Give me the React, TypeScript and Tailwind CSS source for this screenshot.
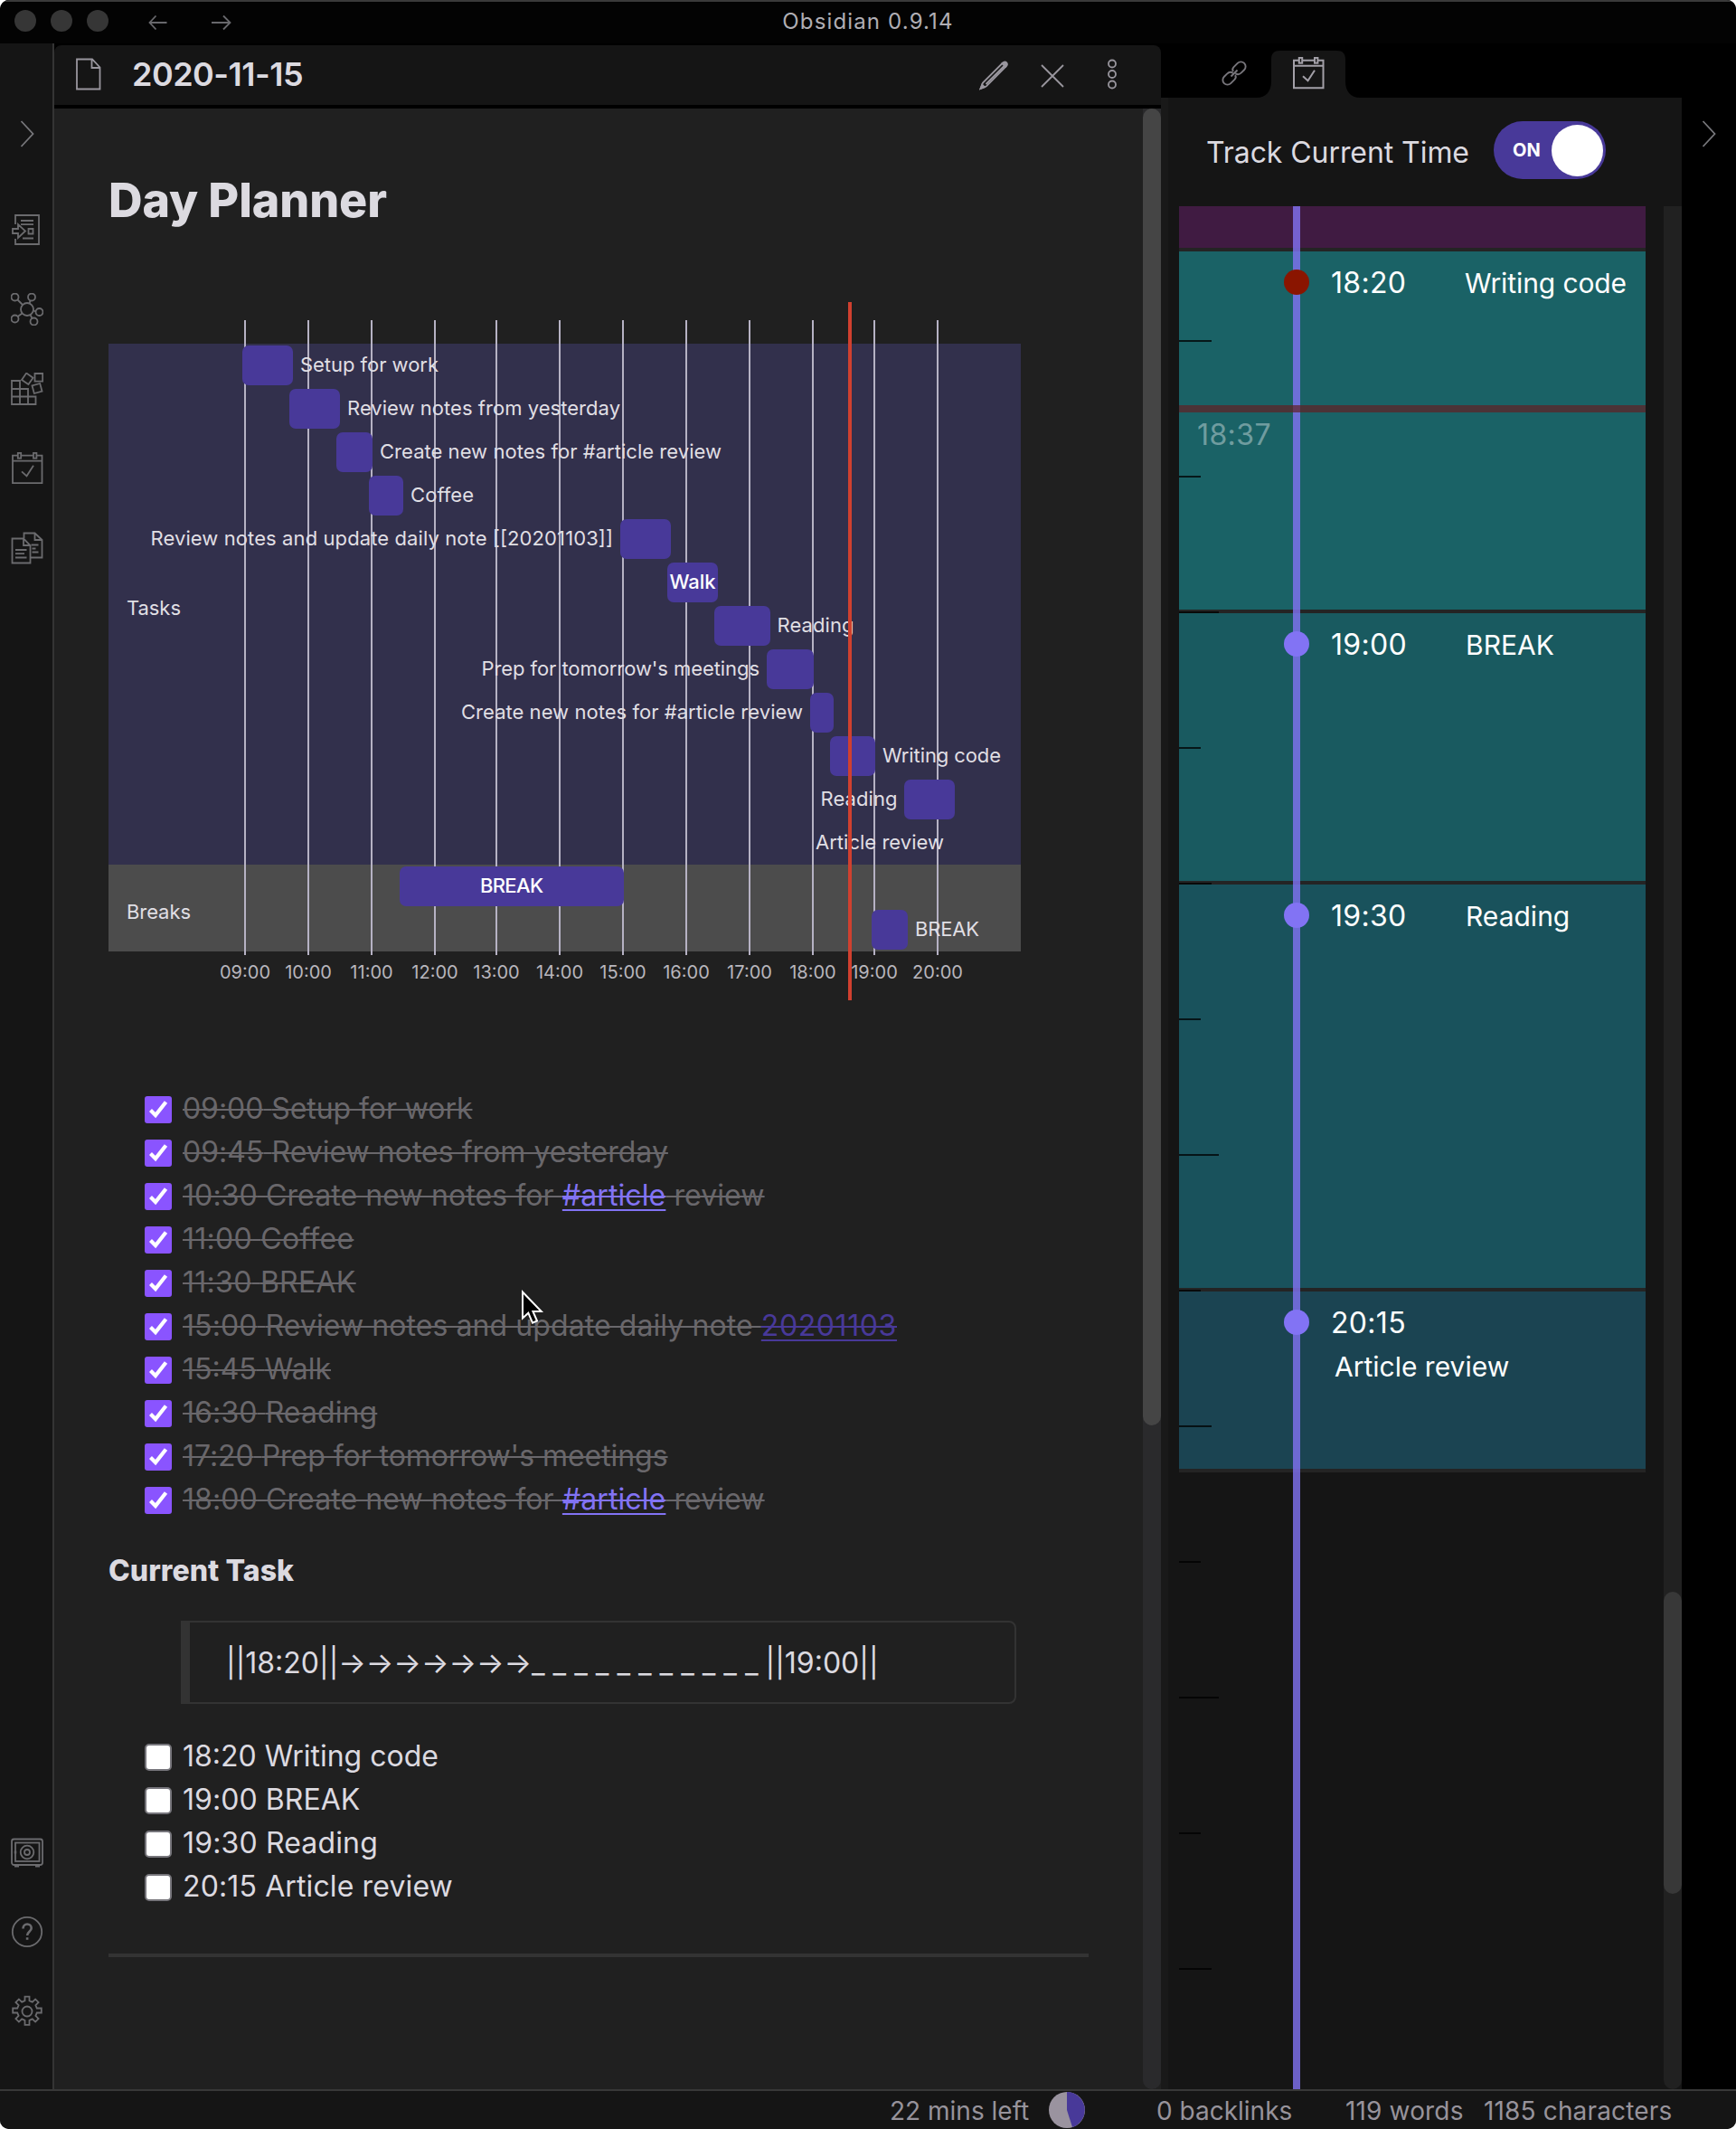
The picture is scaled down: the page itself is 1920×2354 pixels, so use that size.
import React from 'react';

type IconProps = { children: React.ReactNode; size?: number; className?: string; sw?: number };

function Icon({ children, size = 36, className = '', sw = 1.8 }: IconProps) {
  return (
    <svg width={size} height={size} viewBox="0 0 36 36" fill="none" stroke="currentColor" strokeWidth={sw} className={`shrink-0 ${className}`}>
      {children}
    </svg>
  );
}

const calendarPaths = (
  <>
    <path d="M7.500 3.700H2v30.500h32.500V3.700h-5.500M11.500 3.700h13M2 9.700h32.500M12 21.300l5.500 5 7.500-11.500" />
    <rect x="7.800" y="0.900" width="3.400" height="5.800" />
    <rect x="25" y="0.900" width="3.400" height="5.800" />
  </>
);

const ribbonTop = [
  <>
    <path d="M5 12V2h26v32H5v-6" />
    <path d="M2 17h6v-5l8 7.500-8 7.500v-5H2zM11 8h14M11 12.200h14M13 27.500h12M19.500 17h5v5.500h-5z" />
  </>,
  <>
    <circle cx="18" cy="18" r="7" />
    <circle cx="4.500" cy="4.500" r="4" />
    <circle cx="23" cy="4.500" r="4" />
    <circle cx="31.500" cy="21" r="4" />
    <circle cx="25.500" cy="31.500" r="4" />
    <circle cx="4.500" cy="28.500" r="4" />
    <path d="M7.500 7.500l5.500 5.500M21.500 8.200l-1 3.500M25 19.500l2.700.8M21.500 24l2 4M12.500 22.500l-5 3.500" />
  </>,
  <>
    <path d="M1 9h9v26H1zM1 18h18v17H1zM1 26.500h26.500V35H1M10 18v17M19 18v17M26.500 1h8.700v8.700h-8.700z" />
    <rect x="13.800" y="2.300" width="9" height="9" transform="rotate(35 18.300 6.800)" />
    <rect x="24.500" y="13" width="9" height="9" transform="rotate(-15 29 17.500)" />
  </>,
  calendarPaths,
  <>
    <path d="M1.500 7.500h12.500l7.500 7.500v19.500h-20zM14 7.500V15h7.500" />
    <path d="M14.500 7V1.500h12l8 7.500v19.500H22M26.500 1.500V9h8M5 20h12.500M5 24.200h10M5 28.500h12.500M22.500 14.500h8M23.500 18.500h4M23.500 22.500h7" />
  </>,
];

const ribbonBottom = [
  <>
    <rect x="1" y="3.500" width="34" height="28.500" rx="2.500" />
    <rect x="5" y="7.500" width="26.500" height="20.500" />
    <circle cx="18" cy="18" r="7.300" />
    <circle cx="18" cy="18" r="3" />
    <path d="M4 33.200h5M27 33.200h5M5 16.500v3" strokeWidth="2.500" />
  </>,
  <>
    <circle cx="18" cy="18" r="16.200" />
    <path d="M13.500 14.500c0-3 2-5 4.600-5s4.600 1.800 4.600 4.500c0 3.600-4.600 4-4.600 8M18.100 24.200v2.600" strokeWidth="2.600" />
  </>,
  <>
    <circle cx="18" cy="18" r="5.500" />
    <path d="M15.500 1.700h5v4.500l3.300 1.400 3.300-3.200 3.500 3.500-3.200 3.300 1.400 3.300h5v5h-5l-1.400 3.300 3.200 3.300-3.500 3.500-3.300-3.200-3.300 1.400v5h-5v-5l-3.300-1.400-3.300 3.200-3.500-3.500 3.200-3.300-1.400-3.300h-5v-5h5l1.400-3.300-3.200-3.300 3.500-3.500 3.300 3.200 3.300-1.400z" />
  </>,
];

function Chevron() {
  return (
    <svg width="16" height="30" viewBox="0 0 16 30" fill="none" stroke="#77777b" strokeWidth="1.800">
      <path d="M1.500 1l13 14-13 14" />
    </svg>
  );
}

type Bar = { x: number; w: number; label: string; lx: number; lw: number; inside?: boolean };

const bars: Bar[] = [
  { x: 268, w: 56, label: 'Setup for work', lx: 332, lw: 153 },
  { x: 320, w: 56, label: 'Review notes from yesterday', lx: 384, lw: 302 },
  { x: 372, w: 40, label: 'Create new notes for #article review', lx: 420, lw: 378 },
  { x: 408, w: 38, label: 'Coffee', lx: 454, lw: 70 },
  { x: 686, w: 56, label: 'Review notes and update daily note [[20201103]]', lx: 166.5, lw: 511.5 },
  { x: 738, w: 56, label: 'Walk', lx: 740.5, lw: 51, inside: true },
  { x: 790, w: 62, label: 'Reading', lx: 859.5, lw: 85 },
  { x: 848, w: 52, label: "Prep for tomorrow's meetings", lx: 532.5, lw: 307.5 },
  { x: 896, w: 26, label: 'Create new notes for #article review', lx: 510, lw: 378 },
  { x: 918, w: 50, label: 'Writing code', lx: 976, lw: 131 },
  { x: 1000, w: 56, label: 'Reading', lx: 907.5, lw: 85 },
  { x: 0, w: 0, label: 'Article review', lx: 902, lw: 142 },
  { x: 442, w: 248, label: 'BREAK', lx: 531, lw: 70, inside: true },
  { x: 964, w: 40, label: 'BREAK', lx: 1012, lw: 71 },
];

const hours = [271, 341, 411, 481, 549, 619, 689, 759, 829, 899, 967, 1037];

function Gantt() {
  return (
    <svg width="1009" height="776" viewBox="120 332 1009 776" className="block" fontFamily="Inter, sans-serif" fontSize="22">
      <rect x="120" y="380" width="1009" height="576" fill="#32304c" />
      <rect x="120" y="956" width="1009" height="96" fill="#4c4c4c" />
      {hours.map((x) => (
        <rect key={x} x={x - 1} y="354" width="2" height="702" fill="#b6b2c4" />
      ))}
      {bars.map((b, i) => b.w > 0 && <rect key={i} x={b.x} y={382 + i * 48} width={b.w} height="44" rx="7" fill="#483999" />)}
      {bars.map((b, i) => (
        <text key={i} x={b.lx} y={410.500 + i * 48} textLength={b.lw} fill={b.inside ? '#ffffff' : '#e0dfe4'} fontWeight={b.inside ? 500 : 400}>
          {b.label}
        </text>
      ))}
      <text x="140" y="680" textLength="60" fill="#e0dfe4">Tasks</text>
      <text x="140" y="1016" textLength="71" fill="#e0dfe4">Breaks</text>
      {hours.map((x, i) => (
        <text key={x} x={x} y="1082" textAnchor="middle" fontSize="20" fill="#b8b6bd">
          {`${String(i + 9).padStart(2, '0')}:00`}
        </text>
      ))}
      <rect x="938" y="334" width="4" height="772" fill="#d0402f" />
    </svg>
  );
}

type Task = { time: string; text: string; link?: string; tail?: string; dim?: boolean; tracking: string };

const done: Task[] = [
  { time: '09:00', text: 'Setup for work', tracking: 'tracking-[-0.07px]' },
  { time: '09:45', text: 'Review notes from yesterday', tracking: 'tracking-[0.02px]' },
  { time: '10:30', text: 'Create new notes for ', link: '#article', tail: ' review', tracking: 'tracking-[0.1px]' },
  { time: '11:00', text: 'Coffee', tracking: 'tracking-[0.28px]' },
  { time: '11:30', text: 'BREAK', tracking: 'tracking-[0.28px]' },
  { time: '15:00', text: 'Review notes and update daily note ', link: '20201103', dim: true, tracking: 'tracking-[0.08px]' },
  { time: '15:45', text: 'Walk', tracking: 'tracking-[0px]' },
  { time: '16:30', text: 'Reading', tracking: 'tracking-[0.1px]' },
  { time: '17:20', text: "Prep for tomorrow's meetings", tracking: 'tracking-[-0.05px]' },
  { time: '18:00', text: 'Create new notes for ', link: '#article', tail: ' review', tracking: 'tracking-[0.1px]' },
];

const todo: Task[] = [
  { time: '18:20', text: 'Writing code', tracking: 'tracking-[0px]' },
  { time: '19:00', text: 'BREAK', tracking: 'tracking-[0.05px]' },
  { time: '19:30', text: 'Reading', tracking: 'tracking-[0.15px]' },
  { time: '20:15', text: 'Article review', tracking: 'tracking-[0.12px]' },
];

const blocks = [
  { time: '19:00', cls: 'h-[300px] bg-[#195a60]' },
  { time: '19:30', cls: 'h-[450px] bg-[#19525c]' },
];

const tickWidths = ['w-9', 'w-6', 'w-11', 'w-6', 'w-9', 'w-6', 'w-11', 'w-6', 'w-9', 'w-6', 'w-11', 'w-6', 'w-9'];

function Dot({ color }: { color: string }) {
  return <span className={`ml-[116px] mt-[2px] size-7 shrink-0 rounded-full ${color}`} />;
}

function Time({ children }: { children: string }) {
  return <span className="ml-[24px] mt-px w-[149px] text-[32px] leading-8 tracking-[0.3px]">{children}</span>;
}

function DayTimeline() {
  return (
    <div className="relative h-[2082px] w-[516px] overflow-hidden text-white">
      <div className="h-[50px] border-b-4 border-[#242424] bg-[#401b42]" />
      <div className="h-[400px] border-b-4 border-[#242424] bg-[#1a6266]" />
      {blocks.map((b) => (
        <div key={b.time} className={`border-b-4 border-[#242424] ${b.cls}`} />
      ))}
      <div className="h-[200px] border-b-4 border-[#242424] bg-[#1b4452]" />

      {/* quarter-hour ruler */}
      <div className="absolute left-0 top-[148px] flex flex-col gap-[148px]">
        {tickWidths.map((w, i) => (
          <span key={i} className={`h-[2px] bg-black/75 ${w}`} />
        ))}
      </div>
      <div className="absolute inset-y-0 left-[126px] w-2 bg-[#8273f4]/80" />
      <div className="absolute left-0 top-[220px] h-2 w-full bg-[#612023]/70" />
      <div className="absolute left-[20px] top-[233px] text-[32px] leading-[40px] tracking-[0.4px] text-white/40">18:37</div>

      {/* entries */}
      <div className="absolute left-0 top-0 flex w-full flex-col">
        <div className="flex h-[400px] pt-[68px]">
          <Dot color="bg-[#8a1500]" />
          <Time>18:20</Time>
          <span className="ml-[-1px] whitespace-nowrap text-[30px] leading-[34px] tracking-[-0.1px]">Writing code</span>
        </div>
        <div className="flex h-[300px] pt-[68px]">
          <Dot color="bg-[#8273f4]" />
          <Time>19:00</Time>
          <span className="text-[30px] leading-[34px]">BREAK</span>
        </div>
        <div className="flex h-[450px] pt-[68px]">
          <Dot color="bg-[#8273f4]" />
          <Time>19:30</Time>
          <span className="text-[30px] leading-[34px]">Reading</span>
        </div>
        <div className="flex pt-[68px]">
          <Dot color="bg-[#8273f4]" />
          <div className="flex flex-col">
            <Time>20:15</Time>
            <span className="ml-[28px] mt-[15px] whitespace-nowrap text-[30px] leading-[34px]">Article review</span>
          </div>
        </div>
      </div>
    </div>
  );
}

export default function App() {
  return (
    <div className="h-[2354px] w-[1920px] bg-white font-['Inter',sans-serif]">
      <div className="relative flex h-full w-full flex-col overflow-hidden rounded-[10px] bg-black">
        {/* title bar */}
        <header className="relative flex h-12 shrink-0 items-center border-t-2 border-[#3a3a3a] bg-[#030303]">
          <div className="mb-[4px] ml-4 flex gap-4">
            <span className="size-6 rounded-full bg-[#363636]" />
            <span className="size-6 rounded-full bg-[#363636]" />
            <span className="size-6 rounded-full bg-[#363636]" />
          </div>
          <svg width="92" height="18" viewBox="0 0 92 18" fill="none" stroke="#68686c" strokeWidth="1.800" className="ml-[44px]">
            <path d="M20.500 9H1.500M8.500 1.500L1.500 9l7 7.500M70 9h20.500M83 1.500L90.500 9 83 16.500" />
          </svg>
          <div className="absolute inset-x-0 top-[7px] text-center text-[24px] leading-[30px] tracking-[1.15px] text-[#b0aeb4]">Obsidian 0.9.14</div>
        </header>

        <div className="flex min-h-0 flex-1">
          {/* left ribbon */}
          <nav className="flex w-[60px] shrink-0 flex-col border-r-2 border-[#343434] bg-[#151515] text-[#6b6b6e]">
            <div className="flex h-[162px] justify-center pl-[2px] pt-[85px]"><Chevron /></div>
            {ribbonTop.map((p, i) => (
              <div key={i} className="flex h-[88px] items-center justify-center pl-[2px]"><Icon>{p}</Icon></div>
            ))}
            <div className="flex-1" />
            {ribbonBottom.map((p, i) => (
              <div key={i} className="flex h-[88px] items-center justify-center pl-[2px]"><Icon>{p}</Icon></div>
            ))}
            <div className="h-[42px]" />
          </nav>

          {/* note pane */}
          <main className="flex w-[1224px] shrink-0 flex-col pt-[2px]">
            <div className="flex h-[66px] shrink-0 items-center rounded-t-[8px] bg-[#151515] text-[#99969e]">
              <svg width="28" height="36" viewBox="0 0 28 36" fill="none" stroke="currentColor" strokeWidth="1.800" className="ml-6 mt-[-2px]">
                <path d="M1 1.500h17l8.500 9V34.500H1zM17.500 1.500v9.500h9" />
              </svg>
              <span className="mb-[3px] ml-[34px] text-[36px] font-semibold leading-[44px] tracking-[-0.5px] text-[#dcdae0]">2020-11-15</span>
              <div className="flex-1" />
              <svg width="34" height="34" viewBox="0 0 34 34" fill="none" stroke="currentColor" strokeWidth="1.800">
                <path d="M1.500 32l2.500-6.500L25.500 4l3.800 3.800L8 29.300zM7.500 27L27.500 7" />
                <path d="M25.500 4c1.800-1.800 3.300-2 4.600-.8s1.200 2.800-.8 4.600zM1.500 32l1.700-4.500 2.800 2.800z" fill="currentColor" />
              </svg>
              <svg width="26" height="26" viewBox="0 0 26 26" fill="none" stroke="currentColor" strokeWidth="1.800" className="ml-[34px] mt-[2px]">
                <path d="M1 1l24 24M25 1L1 25" />
              </svg>
              <svg width="12" height="34" viewBox="0 0 12 34" fill="none" stroke="currentColor" strokeWidth="1.800" className="ml-[47px] mr-[48px] mt-[-2px]">
                <circle cx="6" cy="5.500" r="4" /><circle cx="6" cy="17" r="4" /><circle cx="6" cy="28.500" r="4" />
              </svg>
            </div>
            <div className="mt-1 flex min-h-0 flex-1 bg-[#202020]">
              <div className="flex-1 pl-[60px]">
                <h1 className="pt-[70px] text-[52px] font-extrabold leading-[64px] tracking-[-0.1px] text-[#dcdae0]">Day Planner</h1>
                <div className="mt-[78px]"><Gantt /></div>

                <ul className="ml-10 mt-[92px]">
                  {done.map((t) => (
                    <li key={t.time} className="flex h-12 items-center">
                      <span className="mt-[5px] flex h-[30px] w-[30px] items-center justify-center rounded-[3px] bg-[#8a54ff]">
                        <svg width="24" height="24" viewBox="0 0 24 24" fill="none" stroke="white" strokeWidth="4.200">
                          <path d="M3.500 12.500l5.500 5.500L20.500 3.500" />
                        </svg>
                      </span>
                      <span className={`ml-3 mt-[3px] whitespace-pre text-[32px] leading-[48px] text-[#69676b] line-through decoration-2 ${t.tracking}`}>
                        {t.time} {t.text}
                        {t.link && (
                          <span className={t.dim ? 'tracking-[0.6px] text-[#483999] underline decoration-2 underline-offset-[4px]' : 'text-[#8273f4] underline decoration-2 underline-offset-[4px]'}>
                            <span className="line-through decoration-2">{t.link}</span>
                          </span>
                        )}
                        {t.tail}
                      </span>
                    </li>
                  ))}
                </ul>

                <h3 className="mt-[37px] text-[32px] font-extrabold leading-[40px] tracking-[0.05px] text-[#dcdae0]">Current Task</h3>
                <div className="ml-20 mt-[35px] flex h-[92px] w-[924px] items-center rounded-r-[8px] border-2 border-l-[10px] border-[#333333] pl-[40px] pt-[2px] text-[32px] text-[#dcdae0]">
                  <span>||18:20||</span>
                  <span>→→→→→→→</span>
                  <span>_ _ _ _ _ _ _ _ _ _ _</span>
                  <span className="ml-[8px]">||19:00||</span>
                </div>

                <ul className="ml-10 mt-[32px] text-[#dcdae0]">
                  {todo.map((t) => (
                    <li key={t.time} className="flex h-12 items-center">
                      <span className="mt-[6px] h-[30px] w-[30px] rounded-[5px] border-2 border-[#76757b] bg-white" />
                      <span className={`ml-3 mt-[3px] text-[32px] leading-[48px] ${t.tracking}`}>{t.time} {t.text}</span>
                    </li>
                  ))}
                </ul>
                <div className="mt-[52px] h-1 w-[1084px] bg-[#333333]" />
              </div>
              <div className="w-5 rounded-b-full bg-[#2a2a2c]">
                <div className="h-[1456px] rounded-full bg-[#454545]" />
              </div>
            </div>
          </main>

          {/* right sidebar */}
          <aside className="flex w-[576px] shrink-0 flex-col">
            <div className="flex h-[60px] shrink-0 items-end">
              <svg width="32" height="32" viewBox="0 0 32 32" fill="none" stroke="#77757b" strokeWidth="1.900" className="mb-[11px] ml-[65px]">
                <g transform="rotate(-45 16 16)">
                  <path d="M11.500 21.200H5.500a5.200 5.200 0 0 1 0-10.400h4.500c3 0 4.800 1.800 5.200 4M20.500 10.800h6a5.200 5.200 0 0 1 0 10.400h-4.500c-3 0-4.800-1.800-5.200-4M11 16h10M11.500 21.200c2 0 3.500-1.500 3.700-3M20.500 10.800c-2 0-3.500 1.500-3.700 3" />
                </g>
              </svg>
              <svg width="114" height="52" viewBox="0 0 114 52" className="ml-[9px]">
                <path d="M0 52c10 0 16-7 16-18V10C16 3 19 0 26 0h62c7 0 10 3 10 10v24c0 11 6 18 16 18z" fill="#151515" />
                <svg x="39" y="7" width="36" height="36" viewBox="0 0 36 36" fill="none" stroke="#a3a0a8" strokeWidth="2">{calendarPaths}</svg>
              </svg>
            </div>
            <div className="flex min-h-0 flex-1 flex-col border-l-8 border-[#191919] bg-[#151515]">
              <div className="flex h-[120px] shrink-0 items-center pl-[42px]">
                <span className="mt-[2px] w-[318px] text-[32px] tracking-[-0.07px] text-[#dcdae0]">Track Current Time</span>
                <div className="mb-[4px] flex h-16 w-[124px] items-center justify-between rounded-full bg-[#483999] pl-[21px] pr-[3px]">
                  <span className="text-[20px] font-bold text-white">ON</span>
                  <span className="size-[57px] rounded-full bg-white" />
                </div>
              </div>
              <div className="flex flex-1 justify-between pl-[12px]">
                <DayTimeline />
                <div className="w-5 rounded-b-full bg-[#212121] pt-[1532px]">
                  <div className="h-[334px] rounded-full bg-[#383838]" />
                </div>
              </div>
            </div>
          </aside>

          <div className="flex flex-1 justify-center pt-[85px]"><Chevron /></div>
        </div>

        {/* status bar */}
        <footer className="flex h-11 shrink-0 items-center border-t-2 border-[#383838] bg-[#151515] text-[28px] leading-[42px] text-[#97939b]">
          <span className="ml-[984px] mt-[2px] w-[176px] whitespace-nowrap">22 mins left</span>
          <svg width="40" height="40" viewBox="0 0 40 40">
            <circle cx="20" cy="20" r="20" fill="#9a939f" />
            <path d="M20 20V0a20 20 0 0 1 6 39z" fill="#483999" />
          </svg>
          <span className="ml-[79px] mt-[2px] w-[209px] whitespace-nowrap">0 backlinks</span>
          <span className="mt-[2px] w-[153px] whitespace-nowrap tracking-[0.15px]">119 words</span>
          <span className="mt-[2px] whitespace-nowrap tracking-[0.15px]">1185 characters</span>
        </footer>

        {/* pointer */}
        <svg width="26" height="40" viewBox="0 0 26 40" className="absolute left-[576px] top-[1426px]">
          <path d="M2 2.500v29l6.300-5.800 4.700 11 5-2.200-4.600-10.500h9.300z" fill="#000" stroke="#fff" strokeWidth="2" />
        </svg>
      </div>
    </div>
  );
}
